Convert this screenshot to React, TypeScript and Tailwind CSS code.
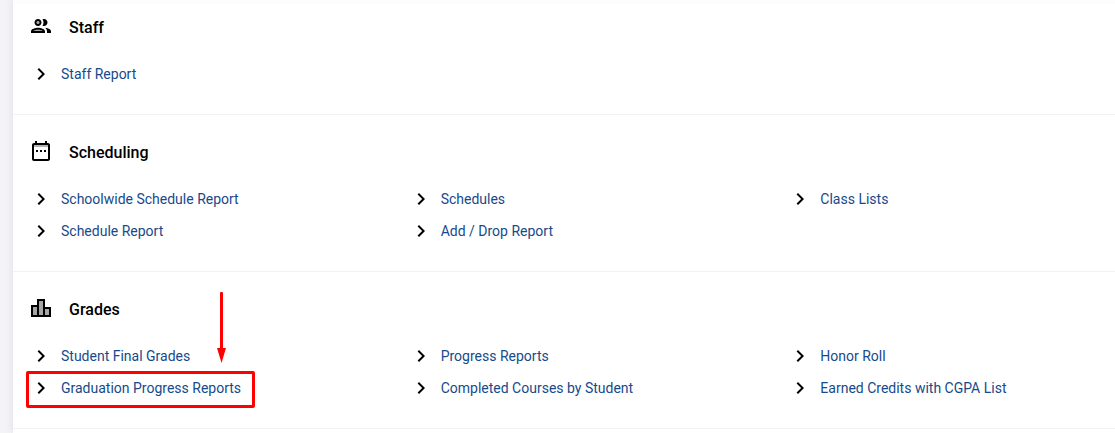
import React from "react";
import { MdChevronRight } from "react-icons/md";

type Report = { label: string; highlighted?: boolean };
type Section = { title: string; icon: () => React.JSX.Element; reports: Report[] };

function GroupIcon() {
  return (
    <svg className="size-6" viewBox="0 0 24 24" fill="currentColor" aria-hidden="true">
      <path
        opacity=".35"
        d="M4.34 17h9.32c-.84-.58-2.87-1.25-4.66-1.25s-3.82.67-4.66 1.25zM9 7c.83 0 1.5.67 1.5 1.5S9.83 10 9 10s-1.5-.67-1.5-1.5S8.17 7 9 7z"
      />
      <path d="M9 12c1.93 0 3.5-1.57 3.5-3.5S10.93 5 9 5 5.5 6.57 5.5 8.5 7.07 12 9 12zm0-5c.83 0 1.5.67 1.5 1.5S9.83 10 9 10s-1.5-.67-1.5-1.5S8.17 7 9 7zm0 6.75c-2.34 0-7 1.17-7 3.5V19h14v-1.75c0-2.33-4.66-3.5-7-3.5zM4.34 17c.84-.58 2.87-1.25 4.66-1.25s3.82.67 4.66 1.25H4.34zm11.7-3.19c1.16.84 1.96 1.96 1.96 3.44V19h4v-1.75c0-2.02-3.5-3.17-5.96-3.44zM15 12c1.93 0 3.5-1.57 3.5-3.5S16.93 5 15 5c-.54 0-1.04.13-1.5.35.63.89 1 1.98 1 3.15s-.37 2.26-1 3.15c.46.22.96.35 1.5.35z" />
    </svg>
  );
}

function CalendarIcon() {
  return (
    <svg className="size-6" viewBox="0 0 24 24" fill="currentColor" aria-hidden="true">
      <path opacity=".3" d="M5 6h14v2H5z" />
      <path d="M7 11h2v2H7zm4 0h2v2h-2zm4 0h2v2h-2z" />
      <path d="M19 4h-1V2h-2v2H8V2H6v2H5c-1.11 0-1.99.9-1.99 2L3 20c0 1.1.89 2 2 2h14c1.1 0 2-.9 2-2V6c0-1.1-.9-2-2-2zm0 16H5V8h14v12zm0-12H5V6h14v2z" />
    </svg>
  );
}

function LeaderboardIcon() {
  return (
    <svg className="size-6" viewBox="0 0 24 24" fill="currentColor" aria-hidden="true">
      <path opacity=".35" d="M4 11h4v8H4zm6-6h4v14h-4zm6 8h4v6h-4z" />
      <path d="M16 11V3H8v6H2v12h20V11h-6zm-6-6h4v14h-4V5zm-6 6h4v8H4v-8zm16 8h-4v-6h4v6z" />
    </svg>
  );
}

const sections: Section[] = [
  { title: "Staff", icon: GroupIcon, reports: [{ label: "Staff Report" }] },
  {
    title: "Scheduling",
    icon: CalendarIcon,
    reports: [
      { label: "Schoolwide Schedule Report" },
      { label: "Schedules" },
      { label: "Class Lists" },
      { label: "Schedule Report" },
      { label: "Add / Drop Report" },
    ],
  },
  {
    title: "Grades",
    icon: LeaderboardIcon,
    reports: [
      { label: "Student Final Grades" },
      { label: "Progress Reports" },
      { label: "Honor Roll" },
      { label: "Graduation Progress Reports", highlighted: true },
      { label: "Completed Courses by Student" },
      { label: "Earned Credits with CGPA List" },
    ],
  },
];

// Red frame around a report with an arrow pointing down at it
function Callout() {
  return (
    <span aria-hidden="true" className="pointer-events-none">
      <span className="absolute -top-px -right-3.5 -bottom-1 -left-[3px] rounded-[2px] border-3 border-[#ff0000]" />
      <svg className="absolute -top-20 right-3.5 h-[72px] w-[10px]" viewBox="0 0 10 72" fill="#ff0000">
        <rect x="3" y="0" width="3" height="60" rx="1" />
        <path d="M0 56h9L4.5 71z" />
      </svg>
    </span>
  );
}

function ReportItem({ label, highlighted }: Report) {
  return (
    <li className="flex">
      <div className="relative">
        <a
          href="#"
          className="flex h-8 items-center gap-2 text-sm whitespace-nowrap text-[#164a8b]"
        >
          <MdChevronRight className="size-6 text-black" aria-hidden="true" />
          {label}
        </a>
        {highlighted && <Callout />}
      </div>
    </li>
  );
}

function ReportSection({ title, icon: Icon, reports }: Section) {
  return (
    <section className="border-b border-[#f2f2f2] py-6 pl-4 first:pt-[10px]">
      <h2 className="flex h-6 items-center gap-4 text-base font-medium text-black">
        <Icon />
        <span className="pt-1">{title}</span>
      </h2>
      <ul className="mt-5 -mr-[53px] grid grid-cols-3">
        {reports.map((report) => (
          <ReportItem key={report.label} {...report} />
        ))}
      </ul>
    </section>
  );
}

export default function App() {
  return (
    <div className="flex min-h-screen overflow-hidden bg-[#f4f4f7] pl-[13px] font-['Roboto',sans-serif]">
      <main className="min-w-0 flex-1 border-t-4 border-[#fdfdfd] bg-white shadow-[0_0_8px_rgba(60,60,90,0.12)]">
        {sections.map((section) => (
          <ReportSection key={section.title} {...section} />
        ))}
      </main>
    </div>
  );
}
